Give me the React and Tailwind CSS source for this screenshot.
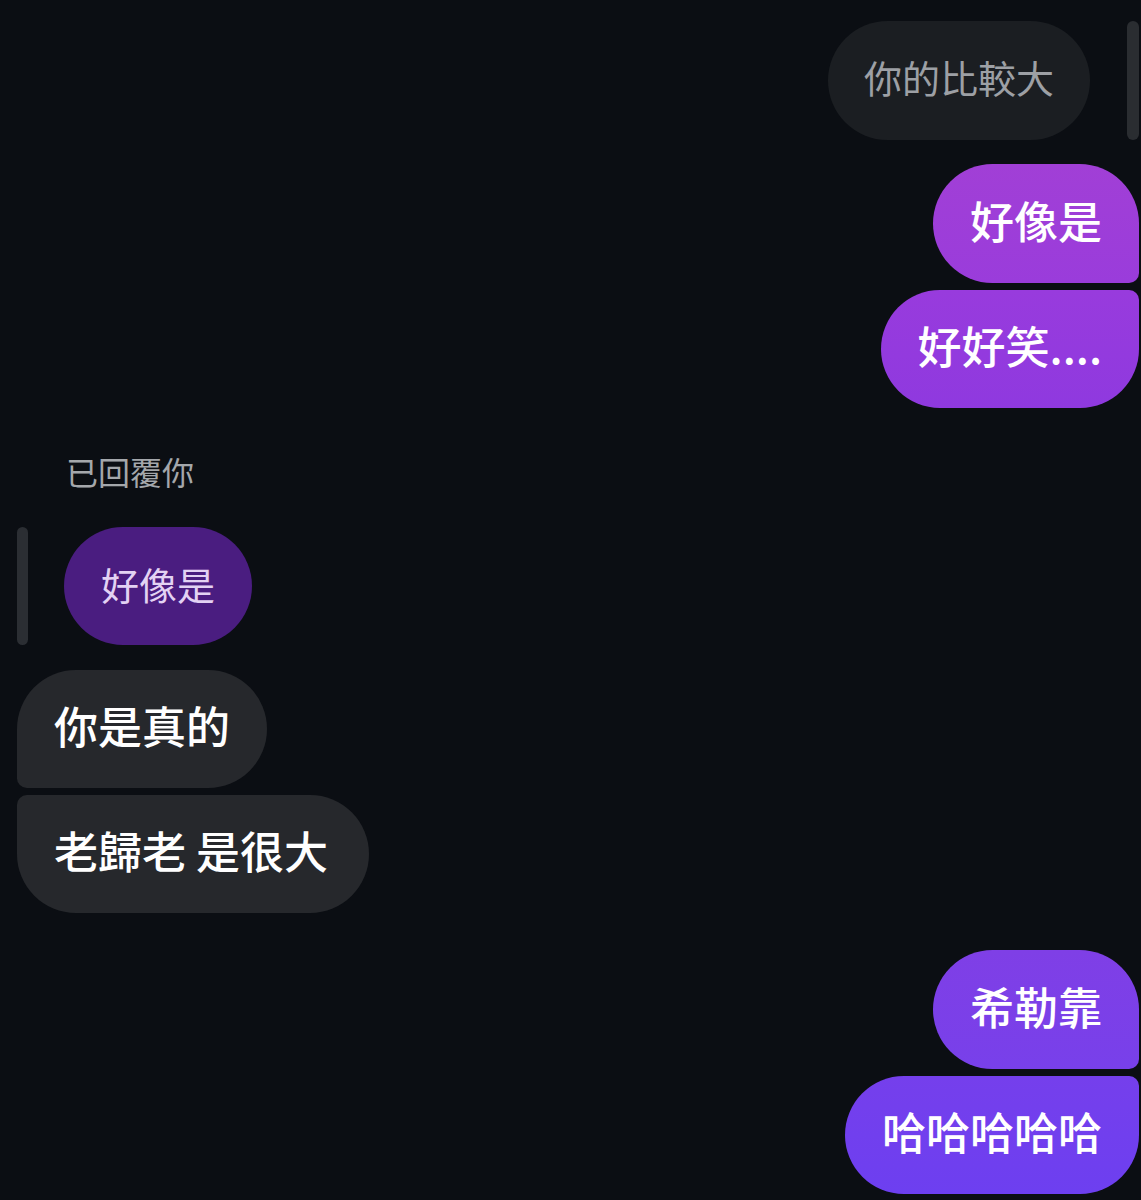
import React from "react";

const font = { fontFamily: '"Noto Sans CJK TC", "Noto Sans CJK SC", "Noto Sans", sans-serif' };

export default function App() {
  return (
    <div className="w-[1141px] h-[1200px] bg-[#0b0e13] overflow-hidden" style={font}>
      <div className="flex flex-col pt-[21px]">
        {/* quoted own message */}
        <div className="flex justify-end items-stretch pr-[2px] gap-[37px]">
          <div className="h-[119px] flex items-center px-[36px] pb-[8px] rounded-[60px] bg-[#1b1e22] text-[#9da0a5] text-[38px] leading-none">
            你的比較大
          </div>
          <div className="w-[12px] rounded-full bg-[#2a2d31]" />
        </div>

        <div className="flex justify-end pr-[2px] mt-[24px]">
          <div className="h-[119px] flex items-center px-[37px] pb-[8px] rounded-tl-[60px] rounded-tr-[60px] rounded-br-[10px] rounded-bl-[60px] bg-gradient-to-b from-[#a13fd6] to-[#9a3cdb] text-white font-medium text-[44px] leading-none">
            好像是
          </div>
        </div>
        <div className="flex justify-end pr-[2px] mt-[7px]">
          <div className="h-[118px] flex items-center px-[37px] pb-[8px] rounded-tl-[60px] rounded-tr-[10px] rounded-br-[60px] rounded-bl-[60px] bg-gradient-to-b from-[#983bdd] to-[#8f39df] text-white font-medium text-[44px] leading-none">
            好好笑....
          </div>
        </div>

        <div className="mt-[47px] pl-[66px] text-[32px] leading-[32px] text-[#a4a7ab]">已回覆你</div>

        <div className="flex items-stretch mt-[40px] pl-[17px] gap-[36px]">
          <div className="w-[11px] rounded-full bg-[#2b2e33]" />
          <div className="h-[118px] flex items-center px-[37px] pb-[5px] rounded-[60px] bg-[#4a1d80] text-[#e3d2f3] text-[38px] leading-none">
            好像是
          </div>
        </div>

        <div className="flex pl-[17px] mt-[25px]">
          <div className="h-[118px] flex items-center px-[37px] pb-[8px] rounded-tl-[60px] rounded-tr-[60px] rounded-br-[60px] rounded-bl-[10px] bg-[#26282c] text-white font-medium text-[44px] leading-none">
            你是真的
          </div>
        </div>
        <div className="flex pl-[17px] mt-[7px]">
          <div className="h-[118px] flex items-center pl-[37px] pr-[41px] pb-[8px] rounded-tl-[10px] rounded-tr-[60px] rounded-br-[60px] rounded-bl-[60px] bg-[#26282c] text-white font-medium text-[44px] leading-none whitespace-pre">
            老歸老 是很大
          </div>
        </div>

        <div className="flex justify-end pr-[2px] mt-[37px]">
          <div className="h-[119px] flex items-center px-[37px] pb-[8px] rounded-tl-[60px] rounded-tr-[60px] rounded-br-[10px] rounded-bl-[60px] bg-gradient-to-b from-[#7f3fe6] to-[#7840ea] text-white font-medium text-[44px] leading-none">
            希勒靠
          </div>
        </div>
        <div className="flex justify-end pr-[2px] mt-[7px]">
          <div className="h-[118px] flex items-center px-[37px] pb-[8px] rounded-tl-[60px] rounded-tr-[10px] rounded-br-[60px] rounded-bl-[60px] bg-gradient-to-b from-[#753fec] to-[#6d3ff0] text-white font-medium text-[44px] leading-none">
            哈哈哈哈哈
          </div>
        </div>
      </div>
    </div>
  );
}
